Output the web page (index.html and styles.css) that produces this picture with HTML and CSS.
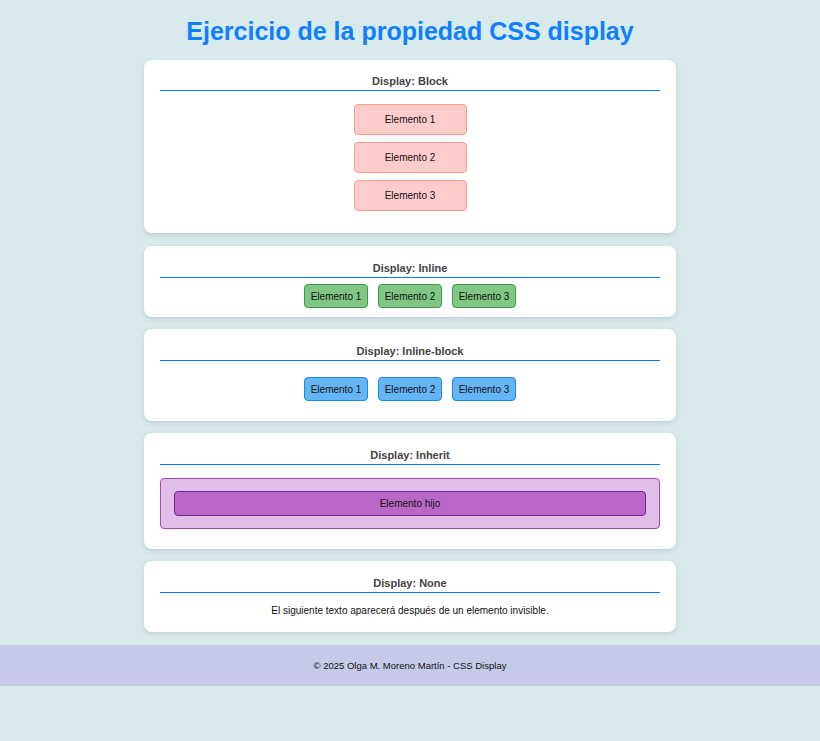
FILE: index.html
```html
<!DOCTYPE html>
<html lang="es">
<head>
<meta charset="utf-8">
<title>Ejercicio de la propiedad CSS display</title>
<link rel="stylesheet" href="styles.css">
</head>
<body>
<h1 class="title">Ejercicio de la propiedad CSS display</h1>

<section class="card card-block">
  <h2 class="card-title">Display: Block</h2>
  <div class="block-list">
    <div class="box box-block">Elemento 1</div>
    <div class="box box-block">Elemento 2</div>
    <div class="box box-block">Elemento 3</div>
  </div>
</section>

<section class="card card-inline">
  <h2 class="card-title">Display: Inline</h2>
  <div class="row-list">
    <span class="box box-inline">Elemento 1</span>
    <span class="box box-inline">Elemento 2</span>
    <span class="box box-inline">Elemento 3</span>
  </div>
</section>

<section class="card card-inline-block">
  <h2 class="card-title">Display: Inline-block</h2>
  <div class="row-list">
    <span class="box box-ib">Elemento 1</span>
    <span class="box box-ib">Elemento 2</span>
    <span class="box box-ib">Elemento 3</span>
  </div>
</section>

<section class="card card-inherit">
  <h2 class="card-title">Display: Inherit</h2>
  <div class="parent">
    <div class="child">Elemento hijo</div>
  </div>
</section>

<section class="card card-none">
  <h2 class="card-title">Display: None</h2>
  <p class="none-text">El siguiente texto aparecerá después de un elemento invisible.</p>
</section>

<footer class="footer">© 2025 Olga M. Moreno Martín - CSS Display</footer>
</body>
</html>
```
FILE: styles.css
```css
* { box-sizing: border-box; }

body {
  margin: 0;
  background: #d9eaed;
  font-family: "Liberation Sans", Arial, sans-serif;
  color: #111;
}

.title {
  margin: 17px 0 14px;
  font-size: 25px;
  line-height: 29px;
  font-weight: bold;
  color: #0d80ff;
  text-align: center;
}

.card {
  width: 532px;
  margin: 0 auto 12px;
  padding: 15px 16px 0;
  background: #fff;
  border-radius: 8px;
  box-shadow: 0 2px 5px rgba(0, 0, 0, 0.12);
}

.card-title {
  margin: 0;
  padding-bottom: 2px;
  font-size: 11px;
  line-height: 14px;
  font-weight: bold;
  color: #444;
  text-align: center;
  border-bottom: 1px solid #007bff;
}

.box {
  font-size: 10px;
  color: #111;
  border: 1px solid;
  border-radius: 4px;
  display: flex;
  align-items: center;
  justify-content: center;
}

/* Block */
.card-block {
  padding-top: 14px;
  padding-bottom: 22px;
  margin-bottom: 13px;
}
.block-list {
  margin-top: 13px;
  display: flex;
  flex-direction: column;
  align-items: center;
  gap: 7px;
}
.box-block {
  width: 113px;
  height: 31px;
  background: #ffcccc;
  border-color: #ff9a8a;
}

/* Inline / inline-block rows */
.row-list {
  display: flex;
  justify-content: center;
  gap: 10px;
}
.card-inline { padding-bottom: 9px; }
.card-inline .row-list { margin-top: 6px; }
.card-inline-block { padding-bottom: 20px; }
.card-inline-block .row-list { margin-top: 16px; }

.box-inline,
.box-ib {
  width: 64px;
  height: 24px;
}
.box-inline {
  background: #81c784;
  border-color: #3f9a4f;
}
.box-ib {
  background: #64b5f6;
  border-color: #1e88e5;
}

/* Inherit */
.card-inherit { padding-bottom: 20px; }
.parent {
  margin-top: 13px;
  padding: 12px 13px;
  background: #e1bee7;
  border: 1px solid #ab47bc;
  border-radius: 4px;
}
.child {
  height: 25px;
  display: flex;
  align-items: center;
  justify-content: center;
  font-size: 10px;
  background: #ba68c8;
  border: 1px solid #7b1fa2;
  border-radius: 4px;
}

/* None */
.card-none { padding-bottom: 15px; }
.none-text {
  margin: 12px 0 0;
  font-size: 10px;
  line-height: 12px;
  text-align: center;
}

.footer {
  margin-top: 13px;
  height: 41px;
  display: flex;
  align-items: center;
  justify-content: center;
  background: #c5cae9;
  font-size: 9.5px;
  color: #111;
}
```
